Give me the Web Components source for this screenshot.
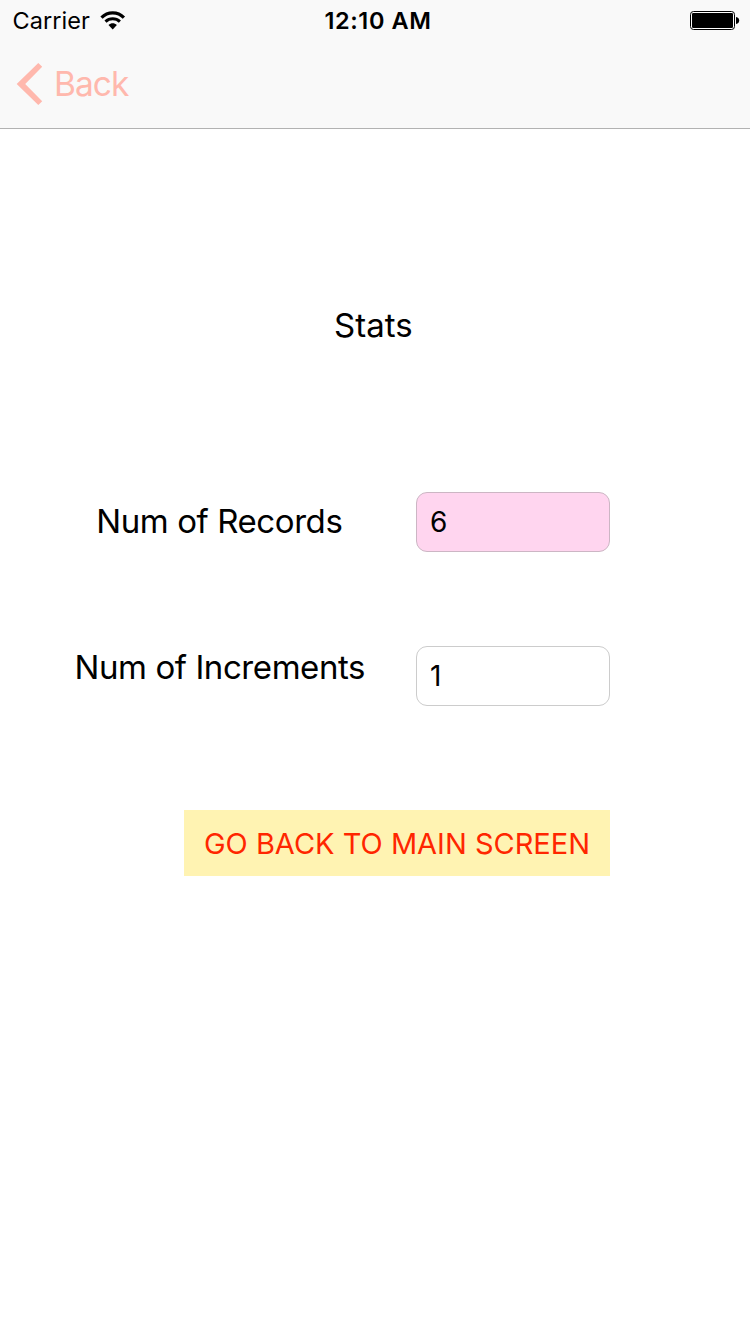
<!DOCTYPE html>
<html lang="en">
<head>
<meta charset="utf-8">
<title>Stats</title>
<style>
html,body{margin:0;height:100%;background:#fff}
body{font-family:Inter,"Liberation Sans",sans-serif;color:#000;overflow:hidden}
</style>
</head>
<body>
<stats-screen></stats-screen>
<script>
function define(name, html) {
  const t = document.createElement('template');
  t.innerHTML = html;
  customElements.define(name, class extends HTMLElement {
    constructor() {
      super();
      this.attachShadow({mode: 'open'}).appendChild(t.content.cloneNode(true));
    }
  });
}

define('wifi-icon', `
<style>:host{display:block;width:26px;height:20px}svg{display:block}</style>
<svg width="26" height="20" viewBox="0 0 26 20">
  <g fill="none" stroke="#000">
    <path d="M1.500 6.600C7.700 .3 17.700 .3 23.900 6.600" stroke-width="3.200"/>
    <path d="M5.500 10.700C9.600 6.900 15.800 6.900 19.900 10.700" stroke-width="3"/>
  </g>
  <path d="M8.500 14C11 11.800 14.400 11.800 16.900 14L12.700 18.400Z"/>
</svg>`);

define('battery-icon', `
<style>:host{display:block;width:50px;height:20px}svg{display:block}</style>
<svg width="50" height="20" viewBox="0 0 50 20">
  <rect x=".5" y=".5" width="44" height="18" rx="3" fill="#fff" stroke="#000"/>
  <rect x="2" y="2" width="41" height="15" rx="1.2"/>
  <path d="M46 6C48.400 6.400 49.200 8 49.200 9.500S48.400 12.600 46 13Z"/>
</svg>`);

define('status-bar', `
<style>
:host{display:grid;grid-template-columns:1fr auto 1fr;align-items:center;height:42px;font-size:23.500px;line-height:42px}
.left{display:flex;align-items:center;padding-left:12.500px}
.carrier{letter-spacing:.05px;width:87.500px;white-space:nowrap}
.time{font-weight:600;letter-spacing:.6px;padding-left:6px}
battery-icon{justify-self:end;margin-right:10px}
</style>
<div class="left"><span class="carrier">Carrier</span><wifi-icon></wifi-icon></div>
<span class="time">12:10 AM</span>
<battery-icon></battery-icon>`);

define('back-button', `
<style>
:host{display:flex;align-items:center;height:84px;padding-left:16px;color:#ffb8ad;font-size:33.500px}
svg{display:block;margin-right:11px}
span{line-height:40px;letter-spacing:-.950px}
</style>
<svg width="27" height="42" viewBox="0 0 27 42"><path d="M.7 21L22.300 0L26.200 3.800L9.200 21L26.200 38.200L22.300 42Z" fill="currentColor"/></svg>
<span><slot></slot></span>`);

define('nav-header', `
<style>:host{display:block;height:128px;background:#f9f9f9;border-bottom:1px solid #b2b2b2}</style>
<status-bar></status-bar><slot></slot>`);

define('stat-field', `
<style>
:host{display:grid;grid-template-columns:416px 194px;height:60px}
.label{display:block;text-align:left;font-size:33px;line-height:40px;white-space:nowrap;box-sizing:border-box;padding-left:var(--label-left);padding-top:var(--label-top);letter-spacing:-.42px}
.value{box-sizing:border-box;height:60px;border:1px solid #ccc;border-color:var(--edge,#ccc);border-radius:11px;background:var(--fill,#fff);font-size:28px;line-height:58px;padding-left:13px}
</style>
<span class="label"><slot></slot></span><div class="value"><slot name="value"></slot></div>`);

define('action-button', `
<style>
:host{display:block;width:426px;height:66px;background:#fff3b2;color:#ff2600;font-size:29px;line-height:67px;text-align:center;white-space:nowrap}
</style><slot></slot>`);

define('stats-screen', `
<style>
:host{display:flex;flex-direction:column;height:1334px;width:750px}
main{display:flex;flex-direction:column;padding-top:176px}
h1{margin:0 0 0 334px;font-size:33px;font-weight:400;line-height:40px;height:40px}
.records{margin-top:147px;--label-left:96.300px;--label-top:9px;--fill:#ffd5ef;--edge:#ccb6c4}
.increments{margin-top:94px;--label-left:74.500px;--label-top:1px}
action-button{margin:104px 0 0 184px}
</style>
<nav-header><back-button>Back</back-button></nav-header>
<main>
  <h1>Stats</h1>
  <stat-field class="records">Num of Records<span slot="value">6</span></stat-field>
  <stat-field class="increments">Num of Increments<span slot="value">1</span></stat-field>
  <action-button>GO BACK TO MAIN SCREEN</action-button>
</main>`);
</script>
</body>
</html>
